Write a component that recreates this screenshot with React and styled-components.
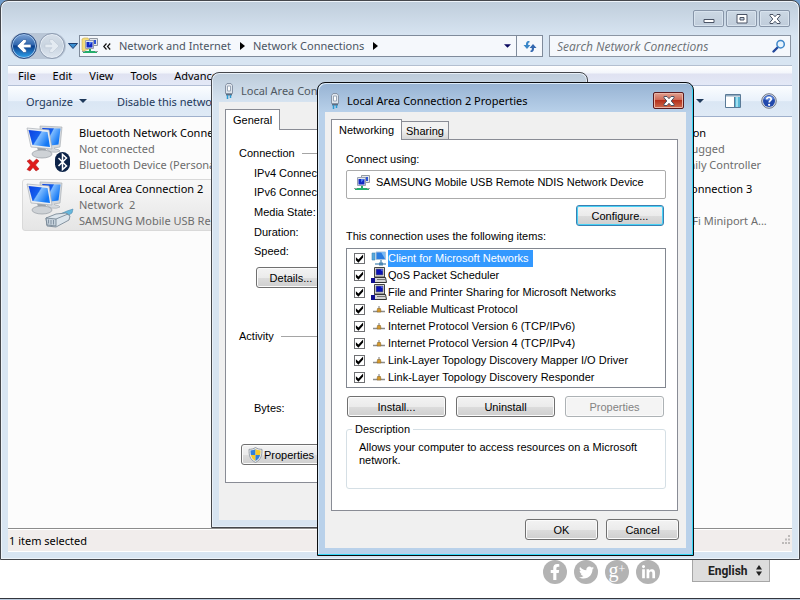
import React from "react";
import styled, { createGlobalStyle, css } from "styled-components";
import { FaFacebookF, FaTwitter, FaLinkedinIn } from "react-icons/fa";

const UI_FONT = `"Noto Sans", "Open Sans", sans-serif`;
const DIALOG_FONT = `"Liberation Sans", Arial, sans-serif`;

const GlobalStyle = createGlobalStyle`
  *, *::before, *::after {
    box-sizing: border-box;
  }
  body {
    margin: 0;
    background: #ffffff;
    overflow: hidden;
    font-family: ${UI_FONT};
    font-size: 11px;
    color: #000000;
  }
  button, input, select {
    font: inherit;
    color: inherit;
    margin: 0;
  }
  h1, h2, h3, p, ul, dl, dd {
    margin: 0;
    padding: 0;
    font-size: inherit;
    font-weight: normal;
  }
  li {
    list-style: none;
  }
`;

const Desktop = styled.div`
  position: relative;
  display: flex;
  flex-direction: column;
  min-height: 100vh;
  background: linear-gradient(#6f9ccb 0, #6f9ccb 12px, #ffffff 12px);
`;

/* ---------- explorer window ---------- */

const St = {
  Explorer: styled.main`
    flex: 1;
    display: flex;
    flex-direction: column;
    padding: 0 7px 7px;
    border: 1px solid #45474c;
    border-radius: 8px 8px 0 0;
    background: linear-gradient(#bfcddb 0, #d8e5f2 36px, #d8e5f2 100%);
    box-shadow: inset 0 0 0 1px #eef4fa;
  `,
  Caption: styled.header`
    display: flex;
    justify-content: flex-end;
    gap: 2px;
    height: 32px;
    padding: 9px 2px 0 0;
  `,
  CaptionButton: styled.button`
    display: flex;
    align-items: center;
    justify-content: center;
    width: 31px;
    height: 17px;
    padding: 0;
    border: 1px solid #8795a8;
    border-radius: 2px;
    background: linear-gradient(#ccd8e4, #bfccda);
    box-shadow: inset 0 0 0 1px #d8e3ee;
  `,
  NavRow: styled.nav`
    display: flex;
    align-items: center;
    height: 26px;
    padding: 0 1px 0 2px;
  `,
  Travel: styled.div`
    display: flex;
    gap: 2px;
    padding: 0 1px;
    border-radius: 13px;
    background: #b9c6d6;
  `,
  TravelButton: styled.button`
    display: flex;
    align-items: center;
    justify-content: center;
    width: 26px;
    height: 26px;
    padding: 0;
    border: 1px solid ${({ $on }) => ($on ? "#2a4a80" : "#8d9bb0")};
    border-radius: 50%;
    box-shadow: inset 0 0 0 1px ${({ $on }) => ($on ? "#9fc4ea" : "#e6edf5")};
    background: ${({ $on }) =>
      $on
        ? "linear-gradient(#7fa4d6 0, #2f66ae 45%, #0c3f8c 50%, #2fa4ee 100%)"
        : "linear-gradient(#d5dee8, #c9d4e0 50%, #dde6ef)"};
  `,
  PlainButton: styled.button`
    display: flex;
    align-items: center;
    justify-content: center;
    padding: 0;
    border: none;
    background: none;
    width: ${({ $width }) => $width || "auto"};
  `,
  Address: styled.div`
    flex: 1;
    display: flex;
    align-items: center;
    height: 22px;
    border: 1px solid #7f8b9b;
    background: #f5f8fc;
    color: #4b5563;
  `,
  Crumbs: styled.ol`
    flex: 1;
    display: flex;
    align-items: center;
    gap: 8px;
    margin: 0;
    padding: 0 0 0 1px;
    line-height: 16px;
    white-space: nowrap;
  `,
  Crumb: styled.li`
    display: flex;
    align-items: center;
    gap: ${({ $gap }) => $gap || "9px"};
  `,
  Refresh: styled.button`
    display: flex;
    align-items: center;
    justify-content: center;
    width: 26px;
    height: 20px;
    padding: 0;
    border: none;
    border-left: 1px solid #7f8b9b;
    background: #f5f8fc;
  `,
  Search: styled.label`
    display: flex;
    align-items: center;
    width: 242px;
    height: 22px;
    margin-left: 6px;
    padding: 0 4px 0 7px;
    border: 1px solid #8b95a3;
    background: #f5f8fc;
  `,
  SearchInput: styled.input`
    flex: 1;
    min-width: 0;
    padding: 0;
    border: none;
    background: none;
    outline: none;
    font: italic 12px "Open Sans", sans-serif;
    &::placeholder {
      color: #6b7075;
      opacity: 1;
    }
  `,
  MenuBar: styled.ul`
    display: flex;
    align-items: center;
    gap: 17px;
    height: 20px;
    margin: 6px 0 0;
    padding: 0 0 0 10px;
    border-top: 1px solid #b3bfd0;
    background: linear-gradient(#ffffff 0, #f3f6fb 7px, #dfe2f1 8px, #e4e9f7 100%);
    white-space: nowrap;
  `,
  ToolBar: styled.div`
    display: flex;
    align-items: center;
    height: 32px;
    padding: 0 7px 0 18px;
    border-top: 1px solid #b3bfd6;
    border-bottom: 1px solid #9fb0cc;
    background: linear-gradient(#fbfdff 0, #e9f1fb 50%, #dae6f4 52%, #dfeaf6 100%);
    color: #1e395b;
    white-space: nowrap;
  `,
  ToolButton: styled.button`
    display: flex;
    align-items: center;
    gap: 6px;
    padding: 0;
    border: none;
    background: none;
    margin-right: ${({ $after }) => $after || "0"};
  `,
  Spacer: styled.span`
    flex: 1;
  `,
  Folder: styled.ul`
    flex: 1;
    display: grid;
    grid-template-columns: repeat(3, 256px);
    grid-auto-rows: 52px;
    row-gap: 4px;
    padding: 6px 0 0 14px;
    background: #fcfcfc;
  `,
  Tile: styled.li`
    grid-column: ${({ $column }) => $column};
    grid-row: ${({ $row }) => $row};
    display: flex;
    gap: 5px;
    padding: 1px 3px;
    border: 1px solid transparent;
    border-radius: 3px;
    white-space: pre;
    line-height: 16px;
    color: #6d6d6d;
    ${({ $selected }) =>
      $selected &&
      css`
        border-color: #d9d9d9;
        background: linear-gradient(#f8f8f8, #e5e5e5);
      `}
  `,
  TileName: styled.h3`
    color: #000000;
  `,
  StatusBar: styled.div`
    display: flex;
    align-items: center;
    justify-content: space-between;
    height: 24px;
    padding: 0 1px;
    border-top: 1px solid #8c8c8c;
    border-bottom: 1px solid #ffffff;
    background: #f1edec;
    box-shadow: inset 0 1px 0 #ffffff;
  `,
};

/* ---------- dialogs ---------- */

const Dialog = styled.section`
  position: absolute;
  left: ${({ $left }) => $left};
  top: ${({ $top }) => $top};
  width: 377px;
  padding: 0 7px 7px;
  border-radius: 8px 8px 0 0;
  ${({ $active }) =>
    $active
      ? css`
          border: 1px solid #0b0d10;
          background: linear-gradient(#97b3d3 0, #b9d1ea 30px, #b9d1ea 100%);
          box-shadow: inset -1px -1px 0 #35d6f5, inset 1px 1px 0 #dcebf8;
        `
      : css`
          border: 1px solid #45474c;
          background: linear-gradient(#bccbda 0, #d7e4f1 30px, #d7e4f1 100%);
          box-shadow: inset 0 0 0 1px #e8f0f8;
        `}
`;

const TitleBar = styled.header`
  display: flex;
  align-items: center;
  gap: 7px;
  height: 29px;
  padding: 6px 2px 0 5px;
  color: ${({ $active }) => ($active ? "#000000" : "#4f5862")};
  white-space: nowrap;
`;

const TitleText = styled.h2`
  flex: 1;
`;

const CloseButton = styled.button`
  display: flex;
  align-items: center;
  justify-content: center;
  width: 31px;
  height: 17px;
  padding: 0;
  border: 1px solid #5a1a1e;
  border-radius: 2px;
  background: linear-gradient(#e0a090 0, #cf6a58 45%, #b5301c 50%, #cd6a4c 100%);
  box-shadow: inset 0 0 0 1px #eab4a6;
`;

const Client = styled.div`
  padding: 7px 7px 8px 6px;
  background: #f0f0f0;
  font-family: ${DIALOG_FONT};
`;

const Tabs = styled.div`
  display: flex;
  align-items: flex-end;
  height: 20px;
`;

const Tab = styled.button`
  position: relative;
  height: ${({ $selected }) => ($selected ? "21px" : "18px")};
  margin-bottom: ${({ $selected }) => ($selected ? "-1px" : "0")};
  padding: 0 ${({ $selected }) => ($selected ? "7px" : "4px")};
  border: 1px solid #898c95;
  border-bottom: none;
  border-left-width: ${({ $selected }) => ($selected ? "1px" : "0")};
  background: ${({ $selected }) =>
    $selected ? "#ffffff" : "linear-gradient(#f2f2f2 45%, #d6d6d6)"};
`;

const Panel = styled.div`
  display: flex;
  flex-direction: column;
  margin-right: 1px;
  padding: ${({ $padding }) => $padding};
  border: 1px solid #898c95;
  background: #ffffff;
`;

const PushButton = styled.button`
  display: inline-flex;
  align-items: center;
  justify-content: center;
  gap: 1px;
  flex: none;
  align-self: ${({ $align }) => $align || "auto"};
  width: ${({ $width }) => $width};
  height: 21px;
  margin: ${({ $margin }) => $margin || "0"};
  padding: 0;
  border: 1px solid #707070;
  border-radius: 3px;
  background: linear-gradient(#f3f3f3 0, #ebebeb 50%, #dcdcdc 52%, #cfcfcf 100%);
  box-shadow: inset 0 0 0 1px #fbfbfb;
  &:disabled {
    border-color: #adb2b5;
    background: #f4f4f4;
    color: #838383;
  }
  ${({ $default }) =>
    $default &&
    css`
      border-color: #3c7fb1;
      box-shadow: inset 0 0 0 1px #48d2f6;
    `}
`;

const Line = styled.p`
  line-height: ${({ $height }) => $height || "20px"};
`;

const DeviceBox = styled.div`
  display: flex;
  align-items: flex-start;
  gap: 5px;
  height: 29px;
  margin: 2px 0 6px;
  padding: 3px 6px;
  border: 1px solid #ababab;
  border-radius: 2px;
  line-height: 16px;
`;

const ItemList = styled.ul`
  margin-top: 2px;
  padding: 1px 7px;
  border: 1px solid #828790;
`;

const Item = styled.li`
  display: flex;
  align-items: center;
  height: 17px;
`;

const ItemLabel = styled.label`
  display: flex;
  align-items: center;
  gap: 1px;
  height: 17px;
  margin-left: 6px;
`;

const ItemText = styled.span`
  line-height: 17px;
  padding: 0 4px 0 0;
  ${({ $selected }) =>
    $selected &&
    css`
      background: #3399ff;
      color: #ffffff;
    `}
`;

const CheckBox = styled.input`
  appearance: none;
  flex: none;
  width: 11px;
  height: 11px;
  border: 1px solid #6f7073;
  background: #ffffff;
  &:checked::after {
    content: "";
    display: block;
    width: 9px;
    height: 9px;
    background: #000000;
    clip-path: polygon(10% 36%, 38% 60%, 90% 6%, 90% 40%, 38% 96%, 10% 70%);
  }
`;

const ButtonRow = styled.div`
  display: flex;
  gap: ${({ $gap }) => $gap};
  justify-content: ${({ $justify }) => $justify || "flex-start"};
  padding: ${({ $padding }) => $padding || "0"};
`;

const Description = styled.fieldset`
  min-width: 0;
  margin: 5px 0 0;
  padding: 5px 12px 21px;
  border: 1px solid #d5dfe5;
  border-radius: 3px;
  line-height: 13px;
`;

const Legend = styled.legend`
  margin-left: -7px;
  padding: 0 3px;
  line-height: 14px;
`;

const GroupTitle = styled.h3`
  display: flex;
  align-items: center;
  gap: 7px;
  line-height: 20px;
  &::after {
    content: "";
    flex: 1;
    height: 1px;
    background: #a5a5a5;
  }
`;

const Facts = styled.ul`
  display: grid;
  grid-auto-rows: 1fr;
  align-items: center;
  height: ${({ $height }) => $height};
  padding-left: 15px;
`;

/* ---------- page footer under the windows ---------- */

const Footer = styled.footer`
  display: flex;
  align-items: flex-start;
  justify-content: flex-end;
  gap: 7px;
  height: 40px;
  padding-right: 30px;
  background: linear-gradient(#ffffff 38px, #33363d 38px, #33363d 39px, #b9c9dc 39px);
`;

const Social = styled.a`
  display: flex;
  align-items: center;
  justify-content: center;
  width: 24px;
  height: 24px;
  padding-bottom: ${({ $letter }) => ($letter ? "5px" : "0")};
  border-radius: 50%;
  background: #b3b3b3;
  color: #ffffff;
  font: 20px/18px "Liberation Serif", serif;
  text-decoration: none;
`;

const Plus = styled.span`
  align-self: flex-start;
  font-size: 12px;
  line-height: 18px;
`;

const Language = styled.label`
  display: flex;
  align-items: center;
  width: 78px;
  height: 22px;
  margin-left: 25px;
  padding: 0 7px 0 15px;
  border: 1px solid #a6a6a6;
  border-top: none;
  background: #dddddd;
`;

const LanguageSelect = styled.select`
  flex: 1;
  min-width: 0;
  appearance: none;
  padding: 0;
  border: none;
  background: none;
  font: bold 12px Roboto, sans-serif;
  color: #222222;
`;

/* ---------- drawings ---------- */

const Triangle = ({ color = "#1e395b", size = 7 }) => (
  <svg width={size} height="4" viewBox="0 0 8 4">
    <path d="M0 0h8L4 4z" fill={color} />
  </svg>
);

const CrossGlyph = () => (
  <svg width="12" height="10" viewBox="0 0 12 10">
    <path
      d="M1 .5h3l2 2.2L8 .5h3v1.3L8.2 5 11 8.200v1.300H8L6 7.300 4 9.500H1V8.200L3.800 5 1 1.800z"
      fill="#fff"
      stroke="#4a5365"
    />
  </svg>
);

const ArrowIcon = ({ left }) => (
  <svg width="18" height="16" viewBox="0 0 18 16">
    <path
      d={
        left
          ? "M8.500 1.500 2 8l6.500 6.500h2.800V12L9 9.700h7V6.300H9L11.300 4V1.500z"
          : "M9.500 1.500 16 8l-6.500 6.500H6.700V12L9 9.700H2V6.300h7L6.700 4V1.500z"
      }
      fill={left ? "#fff" : "#e4ebf2"}
      stroke={left ? "#1e4f94" : "#bdc8d5"}
      strokeWidth=".6"
    />
  </svg>
);

const NetworkIcon = ({ folder }) => (
  <svg width="18" height="18" viewBox="0 0 18 18">
    {folder && (
      <path d="M1 2l2-1h4l1 2v9l-6 2-1-1z" fill="#f4dd7c" stroke="#c9a846" strokeWidth=".6" />
    )}
    <path d="M8.500 1.500h8v7h-8z" fill="#e4e8ec" stroke="#9299a2" />
    <path d="M10 3h5v4h-5z" fill="#2f55d4" />
    <path d="M4.500 3.500h8v8h-8z" fill="#e4e8ee" stroke="#9aa1ae" />
    <path d="M5.500 5h6v5.500h-6z" fill="#1229c4" />
    <path d="M8 5h3.500L8 8.500z" fill="#4d7cf0" />
    <path d="M8 12h2v2h6v2H2v-2h6z" fill="#25ad6b" />
    <path d="M1 14.500h3M14 14.500h3" stroke="#98a09d" />
  </svg>
);

const RefreshIcon = () => (
  <svg width="14" height="13" viewBox="0 0 14 13">
    <path d="M6 1C3.300 1 3 3 3 5H.5L4 9l3.400-4H5.200c0-1.800 0-2.600 1.800-3z" fill="#3a87c8" />
    <path d="M8 12c2.700 0 3-2 3-4h2.500L10 4 6.600 8h2.200c0 1.800 0 2.600-1.800 3z" fill="#3468b0" />
  </svg>
);

const SearchIcon = () => (
  <svg width="14" height="14" viewBox="0 0 14 14">
    <path d="M1.500 12.500 6 8" stroke="#23479b" strokeWidth="2.400" strokeLinecap="round" />
    <circle cx="8.600" cy="5.200" r="3.700" fill="#e8f4fd" stroke="#3f87c9" strokeWidth="1.500" />
  </svg>
);

const PaneIcon = () => (
  <svg width="16" height="14" viewBox="0 0 16 14">
    <path d="M.5.500h15v13H.5z" fill="#fff" stroke="#5a7a97" />
    <path d="M1 1h14v1.500H1z" fill="#8fa9bf" />
    <path d="M10 3h5v10h-5z" fill="#5cb8d6" />
    <path d="M11 3h2v10h-2z" fill="#a2dff0" />
    <path d="M9.500 3v10" stroke="#5a7a97" />
  </svg>
);

const HelpIcon = () => (
  <svg width="16" height="16" viewBox="0 0 16 16">
    <circle cx="8" cy="8" r="7.300" fill="#d9dee6" stroke="#6f7788" />
    <circle cx="8" cy="8" r="6" fill="#2148ac" />
    <path d="M3 6a5.200 4.500 0 0 1 10 0q-5 3-10 0z" fill="#5b84d8" />
    <path
      d="M5.800 6.300C5.800 3.500 10.300 3.700 10.200 6.200 10.100 7.700 8.200 7.700 8.200 9.500"
      fill="none"
      stroke="#fff"
      strokeWidth="1.700"
    />
    <circle cx="8.100" cy="11.800" r="1.100" fill="#fff" />
  </svg>
);

const AdapterIcon = ({ kind }) => (
  <svg width="48" height="48" viewBox="0 0 48 48">
    <defs>
      <linearGradient id="screen" x1="0" y1="0" x2="1" y2=".5">
        <stop offset="0" stopColor="#0a3fe0" />
        <stop offset=".5" stopColor="#1560ee" />
        <stop offset=".55" stopColor="#7fbcff" />
        <stop offset="1" stopColor="#1478f4" />
      </linearGradient>
    </defs>
    <path d="M14 1 36 2l-2 20-6 1 1 1q5 .5 5 2-3 2-9 1L15 20z" fill="#d5d9dd" stroke="#aab0b6" strokeWidth=".7" />
    <path d="M16 3 34.500 3.500 32.500 19.500l-8 1z" fill="url(#screen)" />
    <path d="m11 22 8-1 2 8-8 1z" fill="#9ea4aa" />
    <ellipse cx="16" cy="29" rx="10" ry="4" fill="#ced2d6" stroke="#969ca3" strokeWidth=".7" />
    <path d="M1 3 23 5l3 19-21-2z" fill="#eceef0" stroke="#a9afb6" strokeWidth=".7" />
    <path d="M2.500 5 21.500 7 24 22 6.500 20z" fill="url(#screen)" />
    {kind === "bluetooth" && (
      <>
        <path d="m1 36 3-1.500 3 3 3.500-3.500 2.500 2-3.500 4 3.500 4-3 2-3-3.500L4 46l-3-1.500 3.500-4.500z" fill="#e01b1b" stroke="#a80e0e" strokeWidth=".5" />
        <rect x="29" y="27" width="15" height="20" rx="7.500" fill="#0c2348" />
        <path d="m32.500 33 8 8-4 3.500V29.500l4 3.500-8 8" fill="none" stroke="#fff" strokeWidth="1.500" />
      </>
    )}
    {kind === "cable" && (
      <>
        <path d="m32 34 9-4 6-2-1 4-8 5z" fill="#66b8dd" stroke="#4d8bb2" strokeWidth=".6" />
        <path d="m20 37 10-4 10-1 4 3-1 4-13 7-9-1z" fill="#dce5ec" stroke="#6d7e8d" strokeWidth=".8" />
        <path d="m20 37 10 1v7l-9-1zM30 38l12-5" fill="#c6d2dc" stroke="#6d7e8d" strokeWidth=".8" />
        <path d="M22.500 38.500v4M25 39v4.500M27.500 39v4.500" stroke="#65788a" strokeWidth=".7" />
      </>
    )}
  </svg>
);

const PlugIcon = () => (
  <svg width="10" height="16" viewBox="0 0 10 16">
    <path d="M1.500 2.500 3 .5h4l1.500 2v8h-7z" fill="#dfe5ec" stroke="#8693a5" />
    <path d="M3.500 3h3v5h-3z" fill="#fff" stroke="#9aa7b8" />
    <path d="M2 11h6v1.500H2z" fill="#5c6e83" />
    <path d="M3.500 12v4M6.500 12v3" stroke="#2d9ad1" strokeWidth="1.500" />
  </svg>
);

const ShieldIcon = () => (
  <svg width="15" height="16" viewBox="0 0 15 16">
    <path d="M7.500.5c2 1.300 4 1.800 6.500 1.800 0 6-.5 10-6.500 13.200C1.500 12.300 1 8.300 1 2.300 3.500 2.300 5.500 1.800 7.500.5z" fill="#e3e6ea" stroke="#888f98" strokeWidth=".8" />
    <path d="M7.500 2C6 3 4.500 3.400 2.500 3.500 2.500 5 2.600 6.500 2.900 8h4.600z" fill="#2f7fdc" />
    <path d="M7.500 2c1.500 1 3 1.400 5 1.500 0 1.500-.1 3-.4 4.500H7.500z" fill="#f7c928" />
    <path d="M2.900 8c.6 2.700 2 4.500 4.600 6V8z" fill="#f7c928" />
    <path d="M12.100 8c-.6 2.700-2 4.500-4.600 6V8z" fill="#2f7fdc" />
  </svg>
);

const ClientIcon = () => (
  <svg width="16" height="16" viewBox="0 0 16 16">
    <path d="M1 2h3v7H1z" fill="#58a9dd" stroke="#3e86b8" strokeWidth=".6" />
    <path d="M5 1h9.500v7.500H5z" fill="#2b7de0" stroke="#a9c2db" />
    <path d="M10 1h4v7z" fill="#7cbcf5" />
    <path d="M9 9h2v3h4v2H4v-2h5z" fill="#8fb4cf" />
    <path d="M8 11.500h4v3H8z" fill="#4d87b2" />
  </svg>
);

const ServiceIcon = () => (
  <svg width="16" height="17" viewBox="0 0 16 17">
    <path d="M3.500.5h10v9.500h-10z" fill="#dedede" stroke="#444" />
    <path d="M5 2h7v6H5z" fill="#0a12b5" stroke="#777" strokeWidth=".6" />
    <path d="M9.500 2.500h2v2z" fill="#6f86ff" />
    <path d="M3.500 10.500h11l1 5h-12z" fill="#d6d6d6" stroke="#333" />
    <path d="M0 11h4v5H0z" fill="#101090" />
    <path d="M6 12.500h8" stroke="#777" />
  </svg>
);

const ProtocolIcon = () => (
  <svg width="16" height="16" viewBox="0 0 16 16">
    <path d="M2 9.500h12" stroke="#8b8b8b" strokeWidth="1.500" />
    <path d="M8 4v3" stroke="#777" />
    <path d="M6.500 6.500h3L10 10H6z" fill="#d69a2c" stroke="#8f6a26" strokeWidth=".6" />
  </svg>
);

const ItemIcon = { client: ClientIcon, service: ServiceIcon, protocol: ProtocolIcon };

const Grip = () => (
  <svg width="10" height="10" viewBox="0 0 10 10">
    <path d="M7 0h2v2H7zM4 3.500h2v2H4zM7 3.500h2v2H7zM1 7h2v2H1zM4 7h2v2H4zM7 7h2v2H7z" fill="#bdbab9" />
  </svg>
);

/* ---------- data ---------- */

const menus = ["File", "Edit", "View", "Tools", "Advanced", "Help"];

const adapters = [
  {
    name: "Bluetooth Network Connection",
    status: "Not connected",
    device: "Bluetooth Device (Personal Area ...",
    kind: "bluetooth",
    column: 1,
    row: 1,
  },
  {
    name: "Local Area Connection 2",
    status: "Network  2",
    device: "SAMSUNG Mobile USB Remote N...",
    kind: "cable",
    column: 1,
    row: 2,
    selected: true,
  },
  {
    name: "Local Area Connection",
    status: "Network cable unplugged",
    device: "Realtek PCIe FE Family Controller",
    kind: "cable",
    column: 3,
    row: 1,
  },
  {
    name: "Wireless Network Connection 3",
    status: "Not connected",
    device: "Microsoft Virtual WiFi Miniport A...",
    kind: "cable",
    column: 3,
    row: 2,
  },
];

const items = [
  { text: "Client for Microsoft Networks", icon: "client", selected: true },
  { text: "QoS Packet Scheduler", icon: "service" },
  { text: "File and Printer Sharing for Microsoft Networks", icon: "service" },
  { text: "Reliable Multicast Protocol", icon: "protocol" },
  { text: "Internet Protocol Version 6 (TCP/IPv6)", icon: "protocol" },
  { text: "Internet Protocol Version 4 (TCP/IPv4)", icon: "protocol" },
  { text: "Link-Layer Topology Discovery Mapper I/O Driver", icon: "protocol" },
  { text: "Link-Layer Topology Discovery Responder", icon: "protocol" },
];

const facts = [
  "IPv4 Connectivity:",
  "IPv6 Connectivity:",
  "Media State:",
  "Duration:",
  "Speed:",
];

const CrumbArrow = () => (
  <svg width="5" height="8" viewBox="0 0 5 8">
    <path d="M0 0v8l5-4z" fill="#000" />
  </svg>
);

const Explorer = () => (
  <St.Explorer>
    <St.Caption>
      <St.CaptionButton aria-label="Minimize">
        <svg width="12" height="10" viewBox="0 0 12 10">
          <path d="M1 5.500h10v3H1z" fill="#fff" stroke="#4a5365" />
        </svg>
      </St.CaptionButton>
      <St.CaptionButton aria-label="Maximize">
        <svg width="12" height="10" viewBox="0 0 12 10">
          <path d="M1 .5h10v8.500H1z" fill="#fff" stroke="#4a5365" />
          <path d="M4 3.500h4v2.500H4z" fill="#c4d0dd" stroke="#4a5365" />
        </svg>
      </St.CaptionButton>
      <St.CaptionButton aria-label="Close">
        <CrossGlyph />
      </St.CaptionButton>
    </St.Caption>
    <St.NavRow>
      <St.Travel>
        <St.TravelButton $on aria-label="Back">
          <ArrowIcon left />
        </St.TravelButton>
        <St.TravelButton aria-label="Forward">
          <ArrowIcon />
        </St.TravelButton>
      </St.Travel>
      <St.PlainButton $width="13px" aria-label="Recent pages">
        <svg width="10" height="6" viewBox="0 0 10 6">
          <path d="M.5.500h9L5 5.500z" fill="#3b8fd0" stroke="#1d3f70" />
        </svg>
      </St.PlainButton>
      <St.Address>
        <St.Crumbs>
          <St.Crumb $gap="4px">
            <NetworkIcon folder />
            <svg width="8" height="7" viewBox="0 0 8 7">
              <path d="M3.500.5.800 3.500l2.700 3M7.200.500l-2.700 3 2.700 3" fill="none" stroke="#111" strokeWidth="1.200" />
            </svg>
          </St.Crumb>
          <St.Crumb>
            Network and Internet <CrumbArrow />
          </St.Crumb>
          <St.Crumb>
            Network Connections <CrumbArrow />
          </St.Crumb>
        </St.Crumbs>
        <St.PlainButton $width="18px" aria-label="Previous locations">
          <Triangle color="#0a0a60" />
        </St.PlainButton>
        <St.Refresh aria-label="Refresh">
          <RefreshIcon />
        </St.Refresh>
      </St.Address>
      <St.Search>
        <St.SearchInput
          type="text"
          aria-label="Search"
          placeholder="Search Network Connections"
        />
        <SearchIcon />
      </St.Search>
    </St.NavRow>
    <St.MenuBar>
      {menus.map((menu) => (
        <li key={menu}>{menu}</li>
      ))}
    </St.MenuBar>
    <St.ToolBar>
      <St.ToolButton $after="30px">
        Organize <Triangle size={8} />
      </St.ToolButton>
      <St.ToolButton>Disable this network device</St.ToolButton>
      <St.Spacer />
      <St.ToolButton $after="21px" aria-label="Change view">
        <Triangle size={8} />
      </St.ToolButton>
      <St.ToolButton $after="20px" aria-label="Preview pane">
        <PaneIcon />
      </St.ToolButton>
      <St.ToolButton $after="8px" aria-label="Help">
        <HelpIcon />
      </St.ToolButton>
    </St.ToolBar>
    <St.Folder>
      {adapters.map(({ name, status, device, kind, column, row, selected }) => (
        <St.Tile key={name} $column={column} $row={row} $selected={selected}>
          <AdapterIcon kind={kind} />
          <div>
            <St.TileName>{name}</St.TileName>
            <p>{status}</p>
            <p>{device}</p>
          </div>
        </St.Tile>
      ))}
    </St.Folder>
    <St.StatusBar>
      1 item selected <Grip />
    </St.StatusBar>
  </St.Explorer>
);

const StatusDialog = () => (
  <Dialog $left="211px" $top="72px">
    <TitleBar>
      <PlugIcon />
      <TitleText>Local Area Connection 2 Status</TitleText>
    </TitleBar>
    <Client>
      <Tabs>
        <Tab $selected>General</Tab>
      </Tabs>
      <Panel $padding="13px 14px 17px 13px">
        <GroupTitle>Connection</GroupTitle>
        <Facts $height="98px">
          {facts.map((fact) => (
            <li key={fact}>{fact}</li>
          ))}
        </Facts>
        <PushButton $width="70px" $align="flex-start" $margin="6px 0 38px 17px">
          Details...
        </PushButton>
        <GroupTitle>Activity</GroupTitle>
        <Facts $height="124px">
          <li>Bytes:</li>
        </Facts>
        <PushButton $width="80px" $align="flex-start" $margin="-26px 0 0 2px">
          <ShieldIcon />
          Properties
        </PushButton>
      </Panel>
      <ButtonRow $gap="8px" $padding="29px 0 0" />
    </Client>
  </Dialog>
);

const PropertiesDialog = () => (
  <Dialog $active $left="317px" $top="82px">
    <TitleBar $active>
      <PlugIcon />
      <TitleText>Local Area Connection 2 Properties</TitleText>
      <CloseButton aria-label="Close">
        <CrossGlyph />
      </CloseButton>
    </TitleBar>
    <Client>
      <Tabs>
        <Tab $selected>Networking</Tab>
        <Tab>Sharing</Tab>
      </Tabs>
      <Panel $padding="10px 11px 21px 14px">
        <Line $height="18px">Connect using:</Line>
        <DeviceBox>
          <NetworkIcon />
          SAMSUNG Mobile USB Remote NDIS Network Device
        </DeviceBox>
        <PushButton $default $width="88px" $align="flex-end" $margin="0 2px 0 0">
          Configure...
        </PushButton>
        <Line>This connection uses the following items:</Line>
        <ItemList>
          {items.map(({ text, icon, selected }) => {
            const Icon = ItemIcon[icon];
            return (
              <Item key={text}>
                <CheckBox type="checkbox" id={text} defaultChecked />
                <ItemLabel htmlFor={text}>
                  <Icon />
                  <ItemText $selected={selected}>{text}</ItemText>
                </ItemLabel>
              </Item>
            );
          })}
        </ItemList>
        <ButtonRow $gap="10px" $padding="8px 0 0 1px">
          <PushButton $width="99px">Install...</PushButton>
          <PushButton $width="99px">Uninstall</PushButton>
          <PushButton $width="99px" disabled>
            Properties
          </PushButton>
        </ButtonRow>
        <Description>
          <Legend>Description</Legend>
          Allows your computer to access resources on a Microsoft network.
        </Description>
      </Panel>
      <ButtonRow $gap="8px" $justify="flex-end" $padding="8px 0 0">
        <PushButton $width="73px">OK</PushButton>
        <PushButton $width="73px">Cancel</PushButton>
      </ButtonRow>
    </Client>
  </Dialog>
);

const App = () => (
  <Desktop>
    <GlobalStyle />
    <Explorer />
    <Footer>
      <Social href="#facebook" aria-label="Facebook">
        <FaFacebookF size={16} />
      </Social>
      <Social href="#twitter" aria-label="Twitter">
        <FaTwitter size={15} />
      </Social>
      <Social $letter href="#google" aria-label="Google Plus">
        g<Plus>+</Plus>
      </Social>
      <Social href="#linkedin" aria-label="LinkedIn">
        <FaLinkedinIn size={15} />
      </Social>
      <Language>
        <LanguageSelect aria-label="Language">
          <option>English</option>
        </LanguageSelect>
        <svg width="6" height="11" viewBox="0 0 6 11">
          <path d="M0 4.500 3 0l3 4.500zM0 6.500h6L3 11z" fill="#222" />
        </svg>
      </Language>
    </Footer>
    <StatusDialog />
    <PropertiesDialog />
  </Desktop>
);

export default App;
